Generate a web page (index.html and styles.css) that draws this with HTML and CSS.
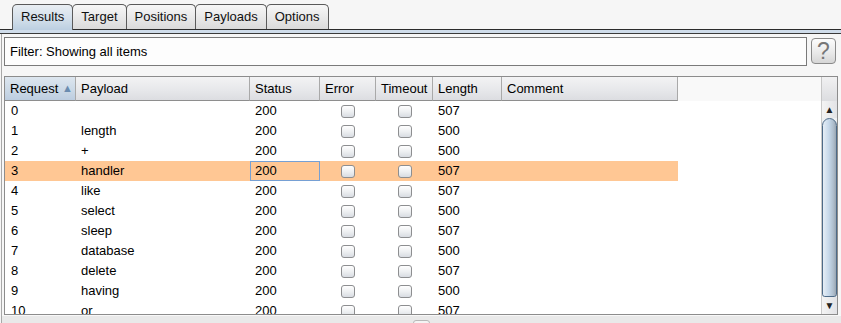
FILE: index.html
```html
<!DOCTYPE html>
<html>
<head>
<meta charset="utf-8">
<link rel="stylesheet" href="styles.css">
</head>
<body>
<div class="app">
  <div class="tabbar">
    <div class="tab active">Results</div>
    <div class="tab">Target</div>
    <div class="tab">Positions</div>
    <div class="tab">Payloads</div>
    <div class="tab">Options</div>
  </div>
  <div class="band"></div>
  <div class="content">
    <div class="filterrow">
      <div class="filter">Filter: Showing all items</div>
      <div class="help">?</div>
    </div>
    <div class="table">
      <div class="thead">
        <div class="th c1 sorted">Request <span class="sort">▲</span></div>
        <div class="th c2">Payload</div>
        <div class="th c3">Status</div>
        <div class="th c4">Error</div>
        <div class="th c5">Timeout</div>
        <div class="th c6">Length</div>
        <div class="th c7">Comment</div>
      </div>
      <div class="corner"></div>
      <div class="tbody">
        <div class="tr"><div class="td c1">0</div><div class="td c2"></div><div class="td c3">200</div><div class="td c4"><span class="cb"></span></div><div class="td c5"><span class="cb"></span></div><div class="td c6">507</div><div class="td c7"></div></div>
        <div class="tr"><div class="td c1">1</div><div class="td c2">length</div><div class="td c3">200</div><div class="td c4"><span class="cb"></span></div><div class="td c5"><span class="cb"></span></div><div class="td c6">500</div><div class="td c7"></div></div>
        <div class="tr"><div class="td c1">2</div><div class="td c2">+</div><div class="td c3">200</div><div class="td c4"><span class="cb"></span></div><div class="td c5"><span class="cb"></span></div><div class="td c6">500</div><div class="td c7"></div></div>
        <div class="tr sel"><div class="td c1">3</div><div class="td c2">handler</div><div class="td c3 focus">200</div><div class="td c4"><span class="cb"></span></div><div class="td c5"><span class="cb"></span></div><div class="td c6">507</div><div class="td c7"></div></div>
        <div class="tr"><div class="td c1">4</div><div class="td c2">like</div><div class="td c3">200</div><div class="td c4"><span class="cb"></span></div><div class="td c5"><span class="cb"></span></div><div class="td c6">507</div><div class="td c7"></div></div>
        <div class="tr"><div class="td c1">5</div><div class="td c2">select</div><div class="td c3">200</div><div class="td c4"><span class="cb"></span></div><div class="td c5"><span class="cb"></span></div><div class="td c6">500</div><div class="td c7"></div></div>
        <div class="tr"><div class="td c1">6</div><div class="td c2">sleep</div><div class="td c3">200</div><div class="td c4"><span class="cb"></span></div><div class="td c5"><span class="cb"></span></div><div class="td c6">507</div><div class="td c7"></div></div>
        <div class="tr"><div class="td c1">7</div><div class="td c2">database</div><div class="td c3">200</div><div class="td c4"><span class="cb"></span></div><div class="td c5"><span class="cb"></span></div><div class="td c6">500</div><div class="td c7"></div></div>
        <div class="tr"><div class="td c1">8</div><div class="td c2">delete</div><div class="td c3">200</div><div class="td c4"><span class="cb"></span></div><div class="td c5"><span class="cb"></span></div><div class="td c6">507</div><div class="td c7"></div></div>
        <div class="tr"><div class="td c1">9</div><div class="td c2">having</div><div class="td c3">200</div><div class="td c4"><span class="cb"></span></div><div class="td c5"><span class="cb"></span></div><div class="td c6">500</div><div class="td c7"></div></div>
        <div class="tr"><div class="td c1">10</div><div class="td c2">or</div><div class="td c3">200</div><div class="td c4"><span class="cb"></span></div><div class="td c5"><span class="cb"></span></div><div class="td c6">507</div><div class="td c7"></div></div>
      </div>
      <div class="vscroll">
        <div class="sbtn up"><span>▲</span></div>
        <div class="thumb"></div>
        <div class="sbtn down"><span>▼</span></div>
      </div>
    </div>
    <div class="splitter"><span class="grip"></span></div>
  </div>
</div>
</body>
</html>
```

FILE: styles.css
```css
* { box-sizing: border-box; }
html, body { margin: 0; padding: 0; }
body {
  width: 841px;
  height: 323px;
  overflow: hidden;
  background: #f6f6f6;
  font-family: "Liberation Sans", Arial, sans-serif;
  font-size: 13px;
  color: #000;
}
.app { display: flex; flex-direction: column; height: 323px; }

.tabbar {
  display: flex;
  align-items: flex-end;
  height: 30px;
  padding: 4px 0 0 12px;
  border-bottom: 1px solid #2b2b2b;
}
.tab {
  height: 25px;
  line-height: 24px;
  padding: 0 8px;
  border: 1px solid #5a5a5a;
  border-bottom: none;
  border-radius: 5px 5px 0 0;
  margin-left: -1px;
  background: linear-gradient(#f7f7f7, #e6e6e6 60%, #dadada);
  color: #111;
}
.tab:first-child { margin-left: 0; }
.tab.active {
  height: 26px;
  margin-bottom: -1px;
  background: linear-gradient(#e9eef3, #d3dfea 55%, #bccfe1);
  position: relative;
  z-index: 1;
}
.band {
  height: 4px;
  background: #cfdcea;
  border-bottom: 1px solid #3a3a3a;
}
.content {
  flex: 1;
  display: flex;
  flex-direction: column;
  border-left: 1px solid #a8a8a8;
  margin-left: 1px;
}
.filterrow {
  display: flex;
  gap: 4px;
  margin: 3px 5px 0 2px;
}
.filter {
  flex: 1;
  height: 29px;
  line-height: 27px;
  border: 1px solid #7a7a7a;
  background: #fdfdfd;
  padding-left: 5px;
}
.help {
  width: 25px;
  height: 26px;
  margin-top: 1px;
  border: 1px solid #8a8a8a;
  border-radius: 4px;
  background: linear-gradient(#fdfdfd, #e8e8e8 60%, #d6d6d6);
  color: #777;
  font-size: 23px;
  line-height: 24px;
  text-align: center;
}

.table {
  margin: 10px 3px 0 2px;
  border: 1px solid #8c8c8c;
  display: grid;
  grid-template-columns: 1fr 16px;
  grid-template-rows: 24px 213px;
  background: #fff;
}
.thead {
  display: flex;
  background: #f9f9f9;
}
.th {
  height: 24px;
  line-height: 23px;
  padding-left: 5px;
  border-right: 1px solid #a9a9a9;
  border-bottom: 1px solid #8e8e8e;
  background: linear-gradient(#f3f3f4, #e6e7ea 60%, #dcdde1);
  white-space: nowrap;
}
.th.sorted {
  background: linear-gradient(#dde6ef, #cad8e6 60%, #bccde0);
}
.sort {
  color: #6a8cb0;
  font-size: 11px;
  vertical-align: 1px;
}
.c1 { width: 71px; }
.c2 { width: 174px; }
.c3 { width: 70px; }
.c4 { width: 56px; }
.c5 { width: 57px; }
.c6 { width: 69px; }
.c7 { width: 176px; }

.corner {
  background: linear-gradient(#f1f1f2, #dcdde0);
  border-left: 1px solid #c6c6c6;
}
.tbody {
  overflow: hidden;
  background: #fff;
}
.tr {
  display: flex;
  height: 20px;
  width: 673px;
}
.tr.sel { background: #ffc794; }
.td {
  height: 20px;
  line-height: 20px;
  padding-left: 6px;
  white-space: nowrap;
}
.td.c2 { padding-left: 5px; }
.td.c3 { padding-left: 5px; }
.td.focus {
  border: 1px solid #76a0d4;
  line-height: 18px;
  padding-left: 4px;
}
.td.c4, .td.c5 {
  padding-left: 0;
  display: flex;
  align-items: center;
  justify-content: center;
}
.td.c6 { padding-left: 5px; }
.cb {
  width: 14px;
  height: 13px;
  border: 1px solid #8d8e90;
  border-radius: 3px;
  background: linear-gradient(#fefefe, #eef0f2 50%, #d8dce2);
}

.vscroll {
  display: flex;
  flex-direction: column;
  background: #eef0f2;
  border-left: 1px solid #c9c9c9;
}
.sbtn {
  height: 17px;
  display: flex;
  align-items: center;
  justify-content: center;
  font-size: 10px;
  color: #222;
  background: linear-gradient(90deg, #f4f4f4, #e2e3e6);
}
.thumb {
  flex: 1;
  border: 1px solid #4d6a88;
  border-radius: 8px 8px 3px 3px;
  background: linear-gradient(90deg, #e6eef6, #c6d8ea 45%, #aebdcc 80%, #9aa6b2);
}
.splitter {
  flex: 1;
  background: #e9e9e9;
  border-top: 1px solid #f8f8f8;
  position: relative;
}
.grip {
  position: absolute;
  left: 411px;
  top: 4px;
  width: 17px;
  height: 6px;
  border: 1px solid #b8b8b8;
  border-radius: 3px;
  background: #f4f4f4;
}
```
